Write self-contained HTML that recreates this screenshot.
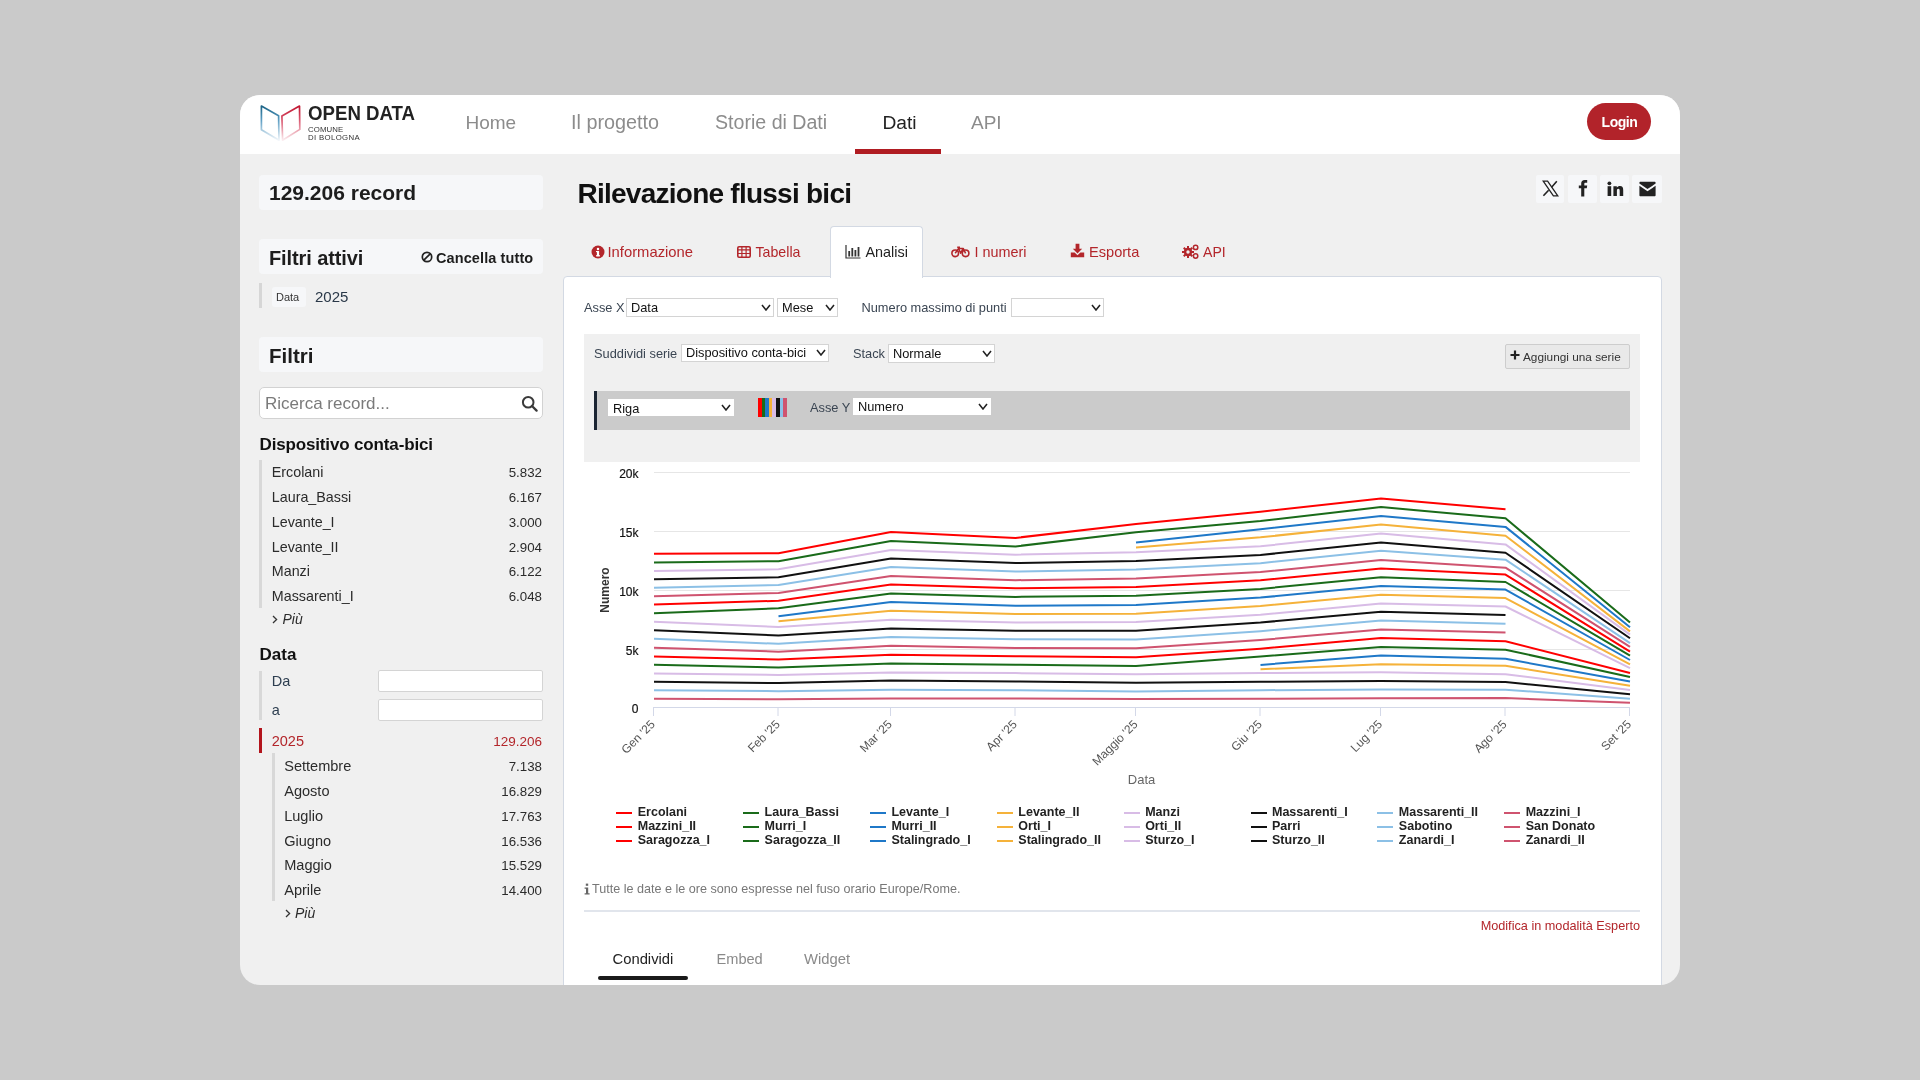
<!DOCTYPE html><html><head><meta charset="utf-8"><style>
html,body{margin:0;padding:0;}
body{width:1920px;height:1080px;overflow:hidden;background:#cacaca;font-family:"Liberation Sans",sans-serif;position:relative;}
.win{position:absolute;left:240px;top:95px;width:1440px;height:890px;border-radius:20px;overflow:hidden;background:#f0f0f0;}
.inner{position:absolute;left:-240px;top:-95px;width:1920px;height:1080px;}
.t{position:absolute;line-height:1;white-space:nowrap;}
.inner{will-change:transform;}
.r{position:absolute;}
</style></head><body><div class="win"><div class="inner">
<div class="r" style="left:240px;top:95px;width:1440px;height:59px;background:#fff;"></div>
<svg class="r" style="left:256.8px;top:102px;" width="48" height="42" viewBox="0 0 48 42">
<defs>
<linearGradient id="gb" x1="0" y1="0" x2="0" y2="1"><stop offset="0" stop-color="#1c6486"/><stop offset="0.4" stop-color="#5a9cc2"/><stop offset="1" stop-color="#f2f6fa"/></linearGradient>
<linearGradient id="gr" x1="0" y1="0" x2="0" y2="1"><stop offset="0" stop-color="#c0142f"/><stop offset="0.4" stop-color="#d9566e"/><stop offset="1" stop-color="#fbedf0"/></linearGradient>
</defs>
<path d="M4.4 4.1 L21.6 13.7 L22.0 38.2 L4.4 27.8 Z" fill="none" stroke="url(#gb)" stroke-width="1.7" stroke-linejoin="round"/>
<path d="M24.9 14.1 L42.5 4.1 L42.8 27.4 L25.6 38.2 Z" fill="none" stroke="url(#gr)" stroke-width="1.7" stroke-linejoin="round"/>
</svg>
<div class="t" style="top:103.00px;font-size:20.5px;color:#222;font-weight:bold;left:307.50px;transform:scaleX(0.91);transform-origin:0 0;letter-spacing:0px;">OPEN DATA</div>
<div class="t" style="top:126.00px;font-size:7.8px;color:#333;font-weight:normal;letter-spacing:0.1px;left:308.00px;">COMUNE</div>
<div class="t" style="top:134.00px;font-size:7.8px;color:#333;font-weight:normal;letter-spacing:0.35px;left:308.00px;">DI BOLOGNA</div>
<div class="t" style="top:113.00px;font-size:19px;color:#8c8c8c;font-weight:normal;left:465.50px;">Home</div>
<div class="t" style="top:113.00px;font-size:19.8px;color:#8c8c8c;font-weight:normal;left:571.00px;">Il progetto</div>
<div class="t" style="top:113.00px;font-size:19.6px;color:#8c8c8c;font-weight:normal;left:715.00px;">Storie di Dati</div>
<div class="t" style="top:113.00px;font-size:19.2px;color:#222;font-weight:normal;left:882.50px;">Dati</div>
<div class="t" style="top:113.00px;font-size:19px;color:#8c8c8c;font-weight:normal;left:971.00px;">API</div>
<div class="r" style="left:855px;top:149px;width:86px;height:5px;background:#b01c22;"></div>
<div class="r" style="left:1587px;top:103px;width:64px;height:37px;background:#b2232a;border-radius:19px;"></div>
<div class="t" style="top:115.00px;font-size:14px;color:#fff;font-weight:bold;letter-spacing:-0.45px;left:1319.50px;width:600px;text-align:center;">Login</div>
<div class="r" style="left:259px;top:175px;width:284px;height:35px;background:#f6f7f9;border-radius:4px;"></div>
<div class="t" style="top:182.00px;font-size:21px;color:#1d1d1d;font-weight:bold;left:269.00px;">129.206 record</div>
<div class="r" style="left:259px;top:239px;width:284px;height:35px;background:#f6f7f9;border-radius:4px;"></div>
<div class="t" style="top:248.00px;font-size:20px;color:#1d1d1d;font-weight:bold;letter-spacing:-0.1px;left:269.00px;">Filtri attivi</div>
<svg class="r" style="left:421px;top:251.2px;" width="12" height="12" viewBox="0 0 12 12"><circle cx="6" cy="6" r="4.7" fill="none" stroke="#222" stroke-width="1.7"/><line x1="2.8" y1="9.2" x2="9.2" y2="2.8" stroke="#222" stroke-width="1.7"/></svg>
<div class="t" style="top:251.00px;font-size:14.5px;color:#1d1d1d;font-weight:bold;letter-spacing:0.1px;left:436.00px;">Cancella tutto</div>
<div class="r" style="left:259px;top:283px;width:3px;height:25px;background:#d6d6d6;"></div>
<div class="r" style="left:272px;top:287px;width:34px;height:20px;background:#f6f7f9;border-radius:3px;"></div>
<div class="t" style="top:292.00px;font-size:11px;color:#333;font-weight:normal;left:276.00px;">Data</div>
<div class="t" style="top:289.00px;font-size:15px;color:#2a3848;font-weight:normal;left:315.00px;">2025</div>
<div class="r" style="left:259px;top:337px;width:284px;height:35px;background:#f6f7f9;border-radius:4px;"></div>
<div class="t" style="top:346.00px;font-size:20.5px;color:#1d1d1d;font-weight:bold;left:269.00px;">Filtri</div>
<div class="r" style="left:259px;top:387px;width:284px;height:32px;background:#fff;border:1px solid #d2d2d2;border-radius:5px;box-sizing:border-box;"></div>
<div class="t" style="top:395.00px;font-size:17px;color:#7a7a7a;font-weight:normal;left:265.00px;">Ricerca record...</div>
<svg class="r" style="left:521px;top:395px;" width="18" height="18" viewBox="0 0 18 18"><circle cx="7.2" cy="7.2" r="5.3" fill="none" stroke="#3a3a3a" stroke-width="2"/><line x1="11" y1="11" x2="15.6" y2="15.6" stroke="#3a3a3a" stroke-width="2.3" stroke-linecap="round"/></svg>
<div class="t" style="top:436.00px;font-size:17px;color:#111;font-weight:bold;letter-spacing:-0.15px;left:259.50px;">Dispositivo conta-bici</div>
<div class="r" style="left:259px;top:460px;width:3px;height:148px;background:#d8d8d8;"></div>
<div class="t" style="top:465.00px;font-size:14.3px;color:#2b2b2b;font-weight:normal;left:271.80px;">Ercolani</div>
<div class="t" style="top:466.00px;font-size:13.3px;color:#2b2b2b;font-weight:normal;right:1378.00px;text-align:right;">5.832</div>
<div class="t" style="top:490.00px;font-size:14.3px;color:#2b2b2b;font-weight:normal;left:271.80px;">Laura_Bassi</div>
<div class="t" style="top:491.00px;font-size:13.3px;color:#2b2b2b;font-weight:normal;right:1378.00px;text-align:right;">6.167</div>
<div class="t" style="top:515.00px;font-size:14.3px;color:#2b2b2b;font-weight:normal;left:271.80px;">Levante_I</div>
<div class="t" style="top:516.00px;font-size:13.3px;color:#2b2b2b;font-weight:normal;right:1378.00px;text-align:right;">3.000</div>
<div class="t" style="top:540.00px;font-size:14.3px;color:#2b2b2b;font-weight:normal;left:271.80px;">Levante_II</div>
<div class="t" style="top:541.00px;font-size:13.3px;color:#2b2b2b;font-weight:normal;right:1378.00px;text-align:right;">2.904</div>
<div class="t" style="top:564.00px;font-size:14.3px;color:#2b2b2b;font-weight:normal;left:271.80px;">Manzi</div>
<div class="t" style="top:565.00px;font-size:13.3px;color:#2b2b2b;font-weight:normal;right:1378.00px;text-align:right;">6.122</div>
<div class="t" style="top:589.00px;font-size:14.3px;color:#2b2b2b;font-weight:normal;left:271.80px;">Massarenti_I</div>
<div class="t" style="top:590.00px;font-size:13.3px;color:#2b2b2b;font-weight:normal;right:1378.00px;text-align:right;">6.048</div>
<svg class="r" style="left:272px;top:615px;" width="6" height="9" viewBox="0 0 6 9"><path d="M1 1 L4.6 4.5 L1 8" fill="none" stroke="#333" stroke-width="1.3"/></svg>
<div class="t" style="top:612.00px;font-size:14px;color:#2b2b2b;font-weight:normal;font-style:italic;left:282.50px;">Più</div>
<div class="t" style="top:646.00px;font-size:17px;color:#111;font-weight:bold;left:259.50px;">Data</div>
<div class="r" style="left:259px;top:671px;width:3px;height:49px;background:#d8d8d8;"></div>
<div class="t" style="top:674.00px;font-size:14.5px;color:#2d3e50;font-weight:normal;left:271.70px;">Da</div>
<div class="r" style="left:378px;top:670px;width:165px;height:22px;background:#fff;border:1px solid #d4d4d4;box-sizing:border-box;border-radius:2px;"></div>
<div class="t" style="top:703.00px;font-size:14.5px;color:#2d3e50;font-weight:normal;left:271.70px;">a</div>
<div class="r" style="left:378px;top:699px;width:165px;height:22px;background:#fff;border:1px solid #d4d4d4;box-sizing:border-box;border-radius:2px;"></div>
<div class="r" style="left:259px;top:728px;width:3px;height:25px;background:#b3141c;"></div>
<div class="t" style="top:734.00px;font-size:14.5px;color:#b3262b;font-weight:normal;left:271.70px;">2025</div>
<div class="t" style="top:735.00px;font-size:13.5px;color:#b3262b;font-weight:normal;right:1378.00px;text-align:right;">129.206</div>
<div class="r" style="left:272px;top:753px;width:3px;height:148px;background:#d8d8d8;"></div>
<div class="t" style="top:759.00px;font-size:14.55px;color:#2b2b2b;font-weight:normal;left:284.20px;">Settembre</div>
<div class="t" style="top:760.00px;font-size:13.3px;color:#2b2b2b;font-weight:normal;right:1378.00px;text-align:right;">7.138</div>
<div class="t" style="top:784.00px;font-size:14.55px;color:#2b2b2b;font-weight:normal;left:284.20px;">Agosto</div>
<div class="t" style="top:785.00px;font-size:13.3px;color:#2b2b2b;font-weight:normal;right:1378.00px;text-align:right;">16.829</div>
<div class="t" style="top:809.00px;font-size:14.55px;color:#2b2b2b;font-weight:normal;left:284.20px;">Luglio</div>
<div class="t" style="top:810.00px;font-size:13.3px;color:#2b2b2b;font-weight:normal;right:1378.00px;text-align:right;">17.763</div>
<div class="t" style="top:834.00px;font-size:14.55px;color:#2b2b2b;font-weight:normal;left:284.20px;">Giugno</div>
<div class="t" style="top:835.00px;font-size:13.3px;color:#2b2b2b;font-weight:normal;right:1378.00px;text-align:right;">16.536</div>
<div class="t" style="top:858.00px;font-size:14.55px;color:#2b2b2b;font-weight:normal;left:284.20px;">Maggio</div>
<div class="t" style="top:859.00px;font-size:13.3px;color:#2b2b2b;font-weight:normal;right:1378.00px;text-align:right;">15.529</div>
<div class="t" style="top:883.00px;font-size:14.55px;color:#2b2b2b;font-weight:normal;left:284.20px;">Aprile</div>
<div class="t" style="top:884.00px;font-size:13.3px;color:#2b2b2b;font-weight:normal;right:1378.00px;text-align:right;">14.400</div>
<svg class="r" style="left:284.5px;top:909.2px;" width="6" height="9" viewBox="0 0 6 9"><path d="M1 1 L4.6 4.5 L1 8" fill="none" stroke="#333" stroke-width="1.3"/></svg>
<div class="t" style="top:906.00px;font-size:14px;color:#2b2b2b;font-weight:normal;font-style:italic;left:295.00px;">Più</div>
<div class="t" style="top:180.00px;font-size:28px;color:#111;font-weight:bold;letter-spacing:-0.75px;left:577.50px;">Rilevazione flussi bici</div>
<div class="r" style="left:1536px;top:175px;width:28px;height:28px;background:#f6f7f9;border-radius:2px;"></div>
<div class="r" style="left:1568px;top:175px;width:29px;height:28px;background:#f6f7f9;border-radius:2px;"></div>
<div class="r" style="left:1600px;top:175px;width:29px;height:28px;background:#f6f7f9;border-radius:2px;"></div>
<div class="r" style="left:1632px;top:175px;width:30px;height:28px;background:#f6f7f9;border-radius:2px;"></div>
<svg class="r" style="left:1542px;top:180px;" width="17" height="17" viewBox="0 0 17 17"><path d="M1.2 1.2 H5.6 L15.8 15.8 H11.4 Z" fill="none" stroke="#222" stroke-width="1.3"/><path d="M14.8 1.2 L9.6 7.2 M6.6 10.2 L1.4 15.8" stroke="#222" stroke-width="1.6"/></svg>
<svg class="r" style="left:1577px;top:179px;" width="12" height="18" viewBox="0 0 12 18"><path d="M4.2 17.5 V9.2 H1.8 V6.4 H4.2 V4.6 C4.2 2.2 5.4 1 7.8 1 H10.2 V3.8 H8.6 C7.6 3.8 7.3 4.2 7.3 5 V6.4 H10.2 L9.8 9.2 H7.3 V17.5 Z" fill="#222"/></svg>
<svg class="r" style="left:1606px;top:180px;" width="18" height="17" viewBox="0 0 18 17"><circle cx="3.4" cy="3.3" r="1.9" fill="#222"/><rect x="1.6" y="6.2" width="3.6" height="9.8" fill="#222"/><path d="M7.4 6.2 H10.8 V7.6 C11.5 6.6 12.6 5.9 14 5.9 C16.4 5.9 17.2 7.4 17.2 10 V16 H13.7 V10.8 C13.7 9.5 13.3 8.8 12.3 8.8 C11.3 8.8 10.9 9.6 10.9 10.8 V16 H7.4 Z" fill="#222"/></svg>
<svg class="r" style="left:1638px;top:181px;" width="19" height="16" viewBox="0 0 19 16"><path d="M1.4 1.8 C1.4 1.2 1.9 0.8 2.5 0.8 H16.5 C17.1 0.8 17.6 1.2 17.6 1.8 V2.6 L9.5 8.1 L1.4 2.6 Z" fill="#222"/><path d="M1.4 4.8 L9.5 10.3 L17.6 4.8 V14.2 C17.6 14.8 17.1 15.2 16.5 15.2 H2.5 C1.9 15.2 1.4 14.8 1.4 14.2 Z" fill="#222"/></svg>
<div class="r" style="left:563px;top:276px;width:1099px;height:824px;background:#fff;border:1px solid #d3d9e3;border-radius:4px;box-sizing:border-box;"></div>
<div class="r" style="left:830px;top:226px;width:93px;height:52px;background:#fff;border:1px solid #d3d9e3;border-bottom:none;border-radius:4px 4px 0 0;box-sizing:border-box;"></div>
<svg class="r" style="left:591px;top:245px;" width="14" height="14" viewBox="0 0 14 14"><circle cx="7" cy="7" r="6.5" fill="#b3262b"/><circle cx="7" cy="3.9" r="1.25" fill="#fff"/><rect x="5.9" y="6" width="2.2" height="5.2" fill="#fff"/><rect x="5" y="10.2" width="4" height="1.2" fill="#fff"/><rect x="5" y="6" width="2.5" height="1.1" fill="#fff"/></svg>
<div class="t" style="top:245.00px;font-size:14.8px;color:#b3262b;font-weight:normal;left:607.50px;">Informazione</div>
<svg class="r" style="left:737px;top:245.5px;" width="14" height="12" viewBox="0 0 14 12"><rect x="0.8" y="0.8" width="12.4" height="10.4" rx="1.2" fill="none" stroke="#b3262b" stroke-width="1.6"/><path d="M0.8 3.9 H13.2 M0.8 7.5 H13.2 M4.9 0.8 V11.2 M9.1 0.8 V11.2" stroke="#b3262b" stroke-width="1.2"/></svg>
<div class="t" style="top:245.00px;font-size:14.2px;color:#b3262b;font-weight:normal;left:755.50px;">Tabella</div>
<svg class="r" style="left:845px;top:244px;" width="16" height="15" viewBox="0 0 16 15"><path d="M1 1 V14 H15.5" fill="none" stroke="#333" stroke-width="1.2"/><rect x="3.3" y="7" width="1.8" height="5.5" fill="#333"/><rect x="6.4" y="4" width="1.8" height="8.5" fill="#333"/><rect x="9.5" y="6" width="1.8" height="6.5" fill="#333"/><rect x="12.6" y="3" width="1.8" height="9.5" fill="#333"/></svg>
<div class="t" style="top:245.00px;font-size:14.4px;color:#222;font-weight:normal;left:865.50px;">Analisi</div>
<svg class="r" style="left:951px;top:246px;" width="19" height="12" viewBox="0 0 19 12"><circle cx="4.2" cy="7.3" r="3.3" fill="none" stroke="#b3262b" stroke-width="1.6"/><circle cx="14.6" cy="7.3" r="3.3" fill="none" stroke="#b3262b" stroke-width="1.6"/><path d="M4.2 7.3 L7.6 2.4 H12.2 L14.6 7.3 M7.6 2.4 L9.6 7.3 L12.2 2.4 M6.2 1.2 H9" fill="none" stroke="#b3262b" stroke-width="1.5" stroke-linejoin="round"/></svg>
<div class="t" style="top:245.00px;font-size:14.4px;color:#b3262b;font-weight:normal;left:974.50px;">I numeri</div>
<svg class="r" style="left:1070px;top:243px;" width="15" height="15" viewBox="0 0 15 15"><path d="M5.6 0.8 H9.4 V5.8 H12.2 L7.5 10.4 L2.8 5.8 H5.6 Z" fill="#b3262b"/><path d="M0.8 9.6 H4.6 L7.5 12.2 L10.4 9.6 H14.2 V14.2 H0.8 Z" fill="#b3262b"/></svg>
<div class="t" style="top:245.00px;font-size:14.6px;color:#b3262b;font-weight:normal;left:1089.00px;">Esporta</div>
<svg class="r" style="left:1182px;top:244px;" width="17" height="15" viewBox="0 0 17 15"><g fill="#b3262b"><circle cx="6" cy="8" r="4.2"/><rect x="5" y="2" width="2" height="12"/><rect x="0" y="7" width="12" height="2"/><rect x="5" y="2" width="2" height="12" transform="rotate(45 6 8)"/><rect x="5" y="2" width="2" height="12" transform="rotate(-45 6 8)"/></g><circle cx="6" cy="8" r="1.7" fill="#f0f0f0"/><circle cx="13.6" cy="3.4" r="2.2" fill="none" stroke="#b3262b" stroke-width="1.5"/><circle cx="13.6" cy="12" r="2.2" fill="none" stroke="#b3262b" stroke-width="1.5"/></svg>
<div class="t" style="top:245.00px;font-size:14.1px;color:#b3262b;font-weight:normal;left:1203.00px;">API</div>
<div class="t" style="top:302.00px;font-size:12.8px;color:#3a4552;font-weight:normal;left:584.00px;">Asse X</div>
<div class="r" style="left:626px;top:298px;width:148px;height:19px;background:#fff;border:1px solid #d4d4d4;box-sizing:border-box;"></div>
<div class="t" style="top:302.00px;font-size:12.8px;color:#111;font-weight:normal;left:631.00px;">Data</div>
<svg class="r" style="left:760.5px;top:303.9px;" width="10" height="7" viewBox="0 0 10 7"><path d="M1 1 L5.0 6 L9 1" fill="none" stroke="#222" stroke-width="1.55"/></svg>
<div class="r" style="left:777px;top:298px;width:61px;height:19px;background:#fff;border:1px solid #d4d4d4;box-sizing:border-box;"></div>
<div class="t" style="top:302.00px;font-size:12.8px;color:#111;font-weight:normal;left:782.00px;">Mese</div>
<svg class="r" style="left:824.5px;top:303.9px;" width="10" height="7" viewBox="0 0 10 7"><path d="M1 1 L5.0 6 L9 1" fill="none" stroke="#222" stroke-width="1.55"/></svg>
<div class="t" style="top:302.00px;font-size:12.8px;color:#3a4552;font-weight:normal;left:861.50px;">Numero massimo di punti</div>
<div class="r" style="left:1011px;top:298px;width:93px;height:19px;background:#fff;border:1px solid #d4d4d4;box-sizing:border-box;"></div>
<div class="t" style="top:302.00px;font-size:12.8px;color:#111;font-weight:normal;left:1016.00px;"></div>
<svg class="r" style="left:1090.5px;top:303.9px;" width="10" height="7" viewBox="0 0 10 7"><path d="M1 1 L5.0 6 L9 1" fill="none" stroke="#222" stroke-width="1.55"/></svg>
<div class="r" style="left:584px;top:334px;width:1056px;height:128px;background:#f0f0f0;"></div>
<div class="t" style="top:348.00px;font-size:12.8px;color:#3a4552;font-weight:normal;left:594.00px;">Suddividi serie</div>
<div class="r" style="left:681px;top:344px;width:148px;height:18px;background:#fff;border:1px solid #d4d4d4;box-sizing:border-box;"></div>
<div class="t" style="top:347.00px;font-size:12.8px;color:#111;font-weight:normal;left:686.00px;">Dispositivo conta-bici</div>
<svg class="r" style="left:815.5px;top:349.4px;" width="10" height="7" viewBox="0 0 10 7"><path d="M1 1 L5.0 6 L9 1" fill="none" stroke="#222" stroke-width="1.55"/></svg>
<div class="t" style="top:348.00px;font-size:12.8px;color:#3a4552;font-weight:normal;left:853.00px;">Stack</div>
<div class="r" style="left:888px;top:344px;width:107px;height:19px;background:#fff;border:1px solid #d4d4d4;box-sizing:border-box;"></div>
<div class="t" style="top:348.00px;font-size:12.8px;color:#111;font-weight:normal;left:893.00px;">Normale</div>
<svg class="r" style="left:981.5px;top:349.9px;" width="10" height="7" viewBox="0 0 10 7"><path d="M1 1 L5.0 6 L9 1" fill="none" stroke="#222" stroke-width="1.55"/></svg>
<div class="r" style="left:1505px;top:344px;width:125px;height:25px;background:#e9e9e9;border:1px solid #cdcdcd;box-sizing:border-box;border-radius:2px;"></div>
<svg class="r" style="left:1510px;top:350px;" width="10" height="10" viewBox="0 0 10 10"><path d="M5 0.5 V9.5 M0.5 5 H9.5" stroke="#222" stroke-width="2.2"/></svg>
<div class="t" style="top:352.00px;font-size:11.8px;color:#333;font-weight:normal;left:1523.00px;">Aggiungi una serie</div>
<div class="r" style="left:594px;top:391px;width:1036px;height:39px;background:#cbcbcb;border-left:3px solid #1b2533;box-sizing:border-box;"></div>
<div class="r" style="left:608px;top:399px;width:126px;height:17px;background:#fff;box-sizing:border-box;"></div>
<div class="t" style="top:403.00px;font-size:12.8px;color:#111;font-weight:normal;left:613.00px;">Riga</div>
<svg class="r" style="left:720.5px;top:403.9px;" width="10" height="7" viewBox="0 0 10 7"><path d="M1 1 L5.0 6 L9 1" fill="none" stroke="#222" stroke-width="1.55"/></svg>
<div class="r" style="left:758.0px;top:398px;width:3.919999999999959px;height:19px;background:#ff0000;"></div>
<div class="r" style="left:761.62px;top:398px;width:3.919999999999959px;height:19px;background:#1a6b1a;"></div>
<div class="r" style="left:765.24px;top:398px;width:3.919999999999959px;height:19px;background:#1f78c8;"></div>
<div class="r" style="left:768.86px;top:398px;width:3.919999999999959px;height:19px;background:#f5b23a;"></div>
<div class="r" style="left:772.48px;top:398px;width:3.919999999999959px;height:19px;background:#d8bce6;"></div>
<div class="r" style="left:776.1px;top:398px;width:3.919999999999959px;height:19px;background:#111111;"></div>
<div class="r" style="left:779.72px;top:398px;width:3.919999999999959px;height:19px;background:#8cc0e6;"></div>
<div class="r" style="left:783.34px;top:398px;width:3.919999999999959px;height:19px;background:#cf536f;"></div>
<div class="t" style="top:402.00px;font-size:12.8px;color:#3a4552;font-weight:normal;left:810.00px;">Asse Y</div>
<div class="r" style="left:853px;top:398px;width:138px;height:17px;background:#fff;box-sizing:border-box;"></div>
<div class="t" style="top:401.00px;font-size:12.8px;color:#111;font-weight:normal;left:858.00px;">Numero</div>
<svg class="r" style="left:977.5px;top:402.9px;" width="10" height="7" viewBox="0 0 10 7"><path d="M1 1 L5.0 6 L9 1" fill="none" stroke="#222" stroke-width="1.55"/></svg>
<svg class="r" style="left:0;top:0" width="1920" height="1080"><line x1="654" y1="472.5" x2="1630" y2="472.5" stroke="#e6e6e6" stroke-width="1"/><line x1="654" y1="531.5" x2="1630" y2="531.5" stroke="#e6e6e6" stroke-width="1"/><line x1="654" y1="590.5" x2="1630" y2="590.5" stroke="#e6e6e6" stroke-width="1"/><line x1="654" y1="649.5" x2="1630" y2="649.5" stroke="#e6e6e6" stroke-width="1"/><line x1="654" y1="707.5" x2="1630" y2="707.5" stroke="#d3d8e8" stroke-width="1"/><line x1="653.5" y1="707" x2="653.5" y2="716" stroke="#d3d8e8" stroke-width="1"/><line x1="778.0" y1="707" x2="778.0" y2="716" stroke="#d3d8e8" stroke-width="1"/><line x1="890.5" y1="707" x2="890.5" y2="716" stroke="#d3d8e8" stroke-width="1"/><line x1="1015.0" y1="707" x2="1015.0" y2="716" stroke="#d3d8e8" stroke-width="1"/><line x1="1135.5" y1="707" x2="1135.5" y2="716" stroke="#d3d8e8" stroke-width="1"/><line x1="1260.0" y1="707" x2="1260.0" y2="716" stroke="#d3d8e8" stroke-width="1"/><line x1="1380.5" y1="707" x2="1380.5" y2="716" stroke="#d3d8e8" stroke-width="1"/><line x1="1505.0" y1="707" x2="1505.0" y2="716" stroke="#d3d8e8" stroke-width="1"/><line x1="1629.5" y1="707" x2="1629.5" y2="716" stroke="#d3d8e8" stroke-width="1"/><polyline points="654,698.7 778.5,699.2 891,698.6 1015.5,698.6 1136,698.9 1260.5,698.7 1381,698.2 1505.5,698.1 1630,702.8" fill="none" stroke="#cf536f" stroke-width="2" stroke-linejoin="round" stroke-linecap="butt"/><polyline points="654,690.3 778.5,691.2 891,689.8 1015.5,690.3 1136,691.5 1260.5,690.2 1381,689.6 1505.5,689.7 1630,698.8" fill="none" stroke="#8cc0e6" stroke-width="2" stroke-linejoin="round" stroke-linecap="butt"/><polyline points="654,681.8 778.5,683 891,680.6 1015.5,681.5 1136,682.8 1260.5,681.8 1381,680.9 1505.5,682.1 1630,694.2" fill="none" stroke="#111111" stroke-width="2" stroke-linejoin="round" stroke-linecap="butt"/><polyline points="654,673.5 778.5,675 891,672.4 1015.5,673.1 1136,674.3 1260.5,673 1381,672.3 1505.5,674.2 1630,690" fill="none" stroke="#d8bce6" stroke-width="2" stroke-linejoin="round" stroke-linecap="butt"/><polyline points="1260.5,669.2 1381,664.2 1505.5,665.8 1630,685.7" fill="none" stroke="#f5b23a" stroke-width="2" stroke-linejoin="round" stroke-linecap="butt"/><polyline points="1260.5,664.9 1381,655.6 1505.5,658.8 1630,681.5" fill="none" stroke="#1f78c8" stroke-width="2" stroke-linejoin="round" stroke-linecap="butt"/><polyline points="654,664.8 778.5,667.5 891,663.6 1015.5,664.8 1136,665.9 1260.5,656.5 1381,646.9 1505.5,649.7 1630,676.9" fill="none" stroke="#1a6b1a" stroke-width="2" stroke-linejoin="round" stroke-linecap="butt"/><polyline points="654,656.5 778.5,659.5 891,654.8 1015.5,656.3 1136,657.2 1260.5,648.7 1381,638.1 1505.5,641.3 1630,673" fill="none" stroke="#ff0000" stroke-width="2" stroke-linejoin="round" stroke-linecap="butt"/><polyline points="654,647.8 778.5,651.7 891,645.8 1015.5,647.9 1136,648.3 1260.5,640 1381,629.5 1505.5,632.4" fill="none" stroke="#cf536f" stroke-width="2" stroke-linejoin="round" stroke-linecap="butt"/><polyline points="654,638.85 778.5,643.8 891,637 1015.5,639.3 1136,639.6 1260.5,631.2 1381,620.6 1505.5,623.8" fill="none" stroke="#8cc0e6" stroke-width="2" stroke-linejoin="round" stroke-linecap="butt"/><polyline points="654,630.2 778.5,635.5 891,628.4 1015.5,630.8 1136,630.7 1260.5,622.5 1381,611.8 1505.5,615" fill="none" stroke="#111111" stroke-width="2" stroke-linejoin="round" stroke-linecap="butt"/><polyline points="654,621.7 778.5,627 891,619.8 1015.5,622.4 1136,622 1260.5,614.7 1381,603.5 1505.5,606.5 1630,668.2" fill="none" stroke="#d8bce6" stroke-width="2" stroke-linejoin="round" stroke-linecap="butt"/><polyline points="778.5,621.2 891,610.8 1015.5,614.1 1136,613.7 1260.5,606 1381,594.7 1505.5,598.1 1630,664.4" fill="none" stroke="#f5b23a" stroke-width="2" stroke-linejoin="round" stroke-linecap="butt"/><polyline points="778.5,616.2 891,602 1015.5,605.7 1136,605 1260.5,597.6 1381,586.1 1505.5,589.6 1630,660" fill="none" stroke="#1f78c8" stroke-width="2" stroke-linejoin="round" stroke-linecap="butt"/><polyline points="654,613.2 778.5,608.3 891,593.4 1015.5,596.9 1136,595.7 1260.5,588.9 1381,577.2 1505.5,582 1630,655.6" fill="none" stroke="#1a6b1a" stroke-width="2" stroke-linejoin="round" stroke-linecap="butt"/><polyline points="654,604.5 778.5,600.8 891,584.6 1015.5,588.3 1136,586.9 1260.5,580.3 1381,568.4 1505.5,574.6 1630,651.7" fill="none" stroke="#ff0000" stroke-width="2" stroke-linejoin="round" stroke-linecap="butt"/><polyline points="654,596.2 778.5,593 891,575.9 1015.5,580.2 1136,578.5 1260.5,572 1381,559.9 1505.5,567.7 1630,646.9" fill="none" stroke="#cf536f" stroke-width="2" stroke-linejoin="round" stroke-linecap="butt"/><polyline points="654,587.7 778.5,585 891,567.1 1015.5,571.5 1136,569.6 1260.5,563.2 1381,550.7 1505.5,559.7 1630,643.1" fill="none" stroke="#8cc0e6" stroke-width="2" stroke-linejoin="round" stroke-linecap="butt"/><polyline points="654,579.35 778.5,577.2 891,558.4 1015.5,563.1 1136,560.9 1260.5,555 1381,542.4 1505.5,552.7 1630,638.3" fill="none" stroke="#111111" stroke-width="2" stroke-linejoin="round" stroke-linecap="butt"/><polyline points="654,571.0 778.5,569.3 891,549.9 1015.5,554.7 1136,552.2 1260.5,546.3 1381,533.4 1505.5,544.4 1630,634.6" fill="none" stroke="#d8bce6" stroke-width="2" stroke-linejoin="round" stroke-linecap="butt"/><polyline points="1136,547.4 1260.5,537.3 1381,524.6 1505.5,535.8 1630,631.4" fill="none" stroke="#f5b23a" stroke-width="2" stroke-linejoin="round" stroke-linecap="butt"/><polyline points="1136,542.4 1260.5,529.2 1381,515.9 1505.5,526.9 1630,627.2" fill="none" stroke="#1f78c8" stroke-width="2" stroke-linejoin="round" stroke-linecap="butt"/><polyline points="654,562.5 778.5,561.2 891,541.1 1015.5,546.4 1136,532.2 1260.5,521 1381,507.1 1505.5,518.3 1630,622.6" fill="none" stroke="#1a6b1a" stroke-width="2" stroke-linejoin="round" stroke-linecap="butt"/><polyline points="654,553.85 778.5,553.3 891,532 1015.5,537.9 1136,523.9 1260.5,511.7 1381,498.6 1505.5,509.3" fill="none" stroke="#ff0000" stroke-width="2" stroke-linejoin="round" stroke-linecap="butt"/></svg>
<div class="t" style="top:468.00px;font-size:12px;color:#111;font-weight:normal;right:1281.50px;text-align:right;-webkit-text-stroke:0.2px #111;">20k</div>
<div class="t" style="top:527.00px;font-size:12px;color:#111;font-weight:normal;right:1281.50px;text-align:right;-webkit-text-stroke:0.2px #111;">15k</div>
<div class="t" style="top:586.00px;font-size:12px;color:#111;font-weight:normal;right:1281.50px;text-align:right;-webkit-text-stroke:0.2px #111;">10k</div>
<div class="t" style="top:645.00px;font-size:12px;color:#111;font-weight:normal;right:1281.50px;text-align:right;-webkit-text-stroke:0.2px #111;">5k</div>
<div class="t" style="top:703.00px;font-size:12px;color:#111;font-weight:normal;right:1281.50px;text-align:right;-webkit-text-stroke:0.2px #111;">0</div>
<div class="t" style="left:574.5px;top:583.5px;width:60px;text-align:center;font-size:12px;font-weight:bold;color:#333;transform:rotate(-90deg);">Numero</div>
<div class="t" style="right:1271px;top:717.8px;font-size:12px;color:#555;transform:rotate(-45deg);transform-origin:100% 0;">Gen '25</div>
<div class="t" style="right:1146.5px;top:717.8px;font-size:12px;color:#555;transform:rotate(-45deg);transform-origin:100% 0;">Feb '25</div>
<div class="t" style="right:1034px;top:717.8px;font-size:12px;color:#555;transform:rotate(-45deg);transform-origin:100% 0;">Mar '25</div>
<div class="t" style="right:909.5px;top:717.8px;font-size:12px;color:#555;transform:rotate(-45deg);transform-origin:100% 0;">Apr '25</div>
<div class="t" style="right:789px;top:717.8px;font-size:12px;color:#555;transform:rotate(-45deg);transform-origin:100% 0;">Maggio '25</div>
<div class="t" style="right:664.5px;top:717.8px;font-size:12px;color:#555;transform:rotate(-45deg);transform-origin:100% 0;">Giu '25</div>
<div class="t" style="right:544px;top:717.8px;font-size:12px;color:#555;transform:rotate(-45deg);transform-origin:100% 0;">Lug '25</div>
<div class="t" style="right:419.5px;top:717.8px;font-size:12px;color:#555;transform:rotate(-45deg);transform-origin:100% 0;">Ago '25</div>
<div class="t" style="right:295px;top:717.8px;font-size:12px;color:#555;transform:rotate(-45deg);transform-origin:100% 0;">Set '25</div>
<div class="t" style="top:773.00px;font-size:13px;color:#666;font-weight:normal;left:841.50px;width:600px;text-align:center;">Data</div>
<div class="r" style="left:616.25px;top:811.5px;width:16.0px;height:2.0px;background:#ff0000;"></div>
<div class="t" style="top:806.00px;font-size:12.5px;color:#222;font-weight:bold;left:637.75px;">Ercolani</div>
<div class="r" style="left:616.25px;top:825.65px;width:16.0px;height:2.0px;background:#ff0000;"></div>
<div class="t" style="top:820.00px;font-size:12.5px;color:#222;font-weight:bold;left:637.75px;">Mazzini_II</div>
<div class="r" style="left:616.25px;top:839.8px;width:16.0px;height:2.0px;background:#ff0000;"></div>
<div class="t" style="top:834.00px;font-size:12.5px;color:#222;font-weight:bold;left:637.75px;">Saragozza_I</div>
<div class="r" style="left:743.1px;top:811.5px;width:16.0px;height:2.0px;background:#1a6b1a;"></div>
<div class="t" style="top:806.00px;font-size:12.5px;color:#222;font-weight:bold;left:764.60px;">Laura_Bassi</div>
<div class="r" style="left:743.1px;top:825.65px;width:16.0px;height:2.0px;background:#1a6b1a;"></div>
<div class="t" style="top:820.00px;font-size:12.5px;color:#222;font-weight:bold;left:764.60px;">Murri_I</div>
<div class="r" style="left:743.1px;top:839.8px;width:16.0px;height:2.0px;background:#1a6b1a;"></div>
<div class="t" style="top:834.00px;font-size:12.5px;color:#222;font-weight:bold;left:764.60px;">Saragozza_II</div>
<div class="r" style="left:869.95px;top:811.5px;width:16.0px;height:2.0px;background:#1f78c8;"></div>
<div class="t" style="top:806.00px;font-size:12.5px;color:#222;font-weight:bold;left:891.45px;">Levante_I</div>
<div class="r" style="left:869.95px;top:825.65px;width:16.0px;height:2.0px;background:#1f78c8;"></div>
<div class="t" style="top:820.00px;font-size:12.5px;color:#222;font-weight:bold;left:891.45px;">Murri_II</div>
<div class="r" style="left:869.95px;top:839.8px;width:16.0px;height:2.0px;background:#1f78c8;"></div>
<div class="t" style="top:834.00px;font-size:12.5px;color:#222;font-weight:bold;left:891.45px;">Stalingrado_I</div>
<div class="r" style="left:996.8px;top:811.5px;width:16.0px;height:2.0px;background:#f5b23a;"></div>
<div class="t" style="top:806.00px;font-size:12.5px;color:#222;font-weight:bold;left:1018.30px;">Levante_II</div>
<div class="r" style="left:996.8px;top:825.65px;width:16.0px;height:2.0px;background:#f5b23a;"></div>
<div class="t" style="top:820.00px;font-size:12.5px;color:#222;font-weight:bold;left:1018.30px;">Orti_I</div>
<div class="r" style="left:996.8px;top:839.8px;width:16.0px;height:2.0px;background:#f5b23a;"></div>
<div class="t" style="top:834.00px;font-size:12.5px;color:#222;font-weight:bold;left:1018.30px;">Stalingrado_II</div>
<div class="r" style="left:1123.65px;top:811.5px;width:16.0px;height:2.0px;background:#d8bce6;"></div>
<div class="t" style="top:806.00px;font-size:12.5px;color:#222;font-weight:bold;left:1145.15px;">Manzi</div>
<div class="r" style="left:1123.65px;top:825.65px;width:16.0px;height:2.0px;background:#d8bce6;"></div>
<div class="t" style="top:820.00px;font-size:12.5px;color:#222;font-weight:bold;left:1145.15px;">Orti_II</div>
<div class="r" style="left:1123.65px;top:839.8px;width:16.0px;height:2.0px;background:#d8bce6;"></div>
<div class="t" style="top:834.00px;font-size:12.5px;color:#222;font-weight:bold;left:1145.15px;">Sturzo_I</div>
<div class="r" style="left:1250.5px;top:811.5px;width:16.0px;height:2.0px;background:#111111;"></div>
<div class="t" style="top:806.00px;font-size:12.5px;color:#222;font-weight:bold;left:1272.00px;">Massarenti_I</div>
<div class="r" style="left:1250.5px;top:825.65px;width:16.0px;height:2.0px;background:#111111;"></div>
<div class="t" style="top:820.00px;font-size:12.5px;color:#222;font-weight:bold;left:1272.00px;">Parri</div>
<div class="r" style="left:1250.5px;top:839.8px;width:16.0px;height:2.0px;background:#111111;"></div>
<div class="t" style="top:834.00px;font-size:12.5px;color:#222;font-weight:bold;left:1272.00px;">Sturzo_II</div>
<div class="r" style="left:1377.35px;top:811.5px;width:16.0px;height:2.0px;background:#8cc0e6;"></div>
<div class="t" style="top:806.00px;font-size:12.5px;color:#222;font-weight:bold;left:1398.85px;">Massarenti_II</div>
<div class="r" style="left:1377.35px;top:825.65px;width:16.0px;height:2.0px;background:#8cc0e6;"></div>
<div class="t" style="top:820.00px;font-size:12.5px;color:#222;font-weight:bold;left:1398.85px;">Sabotino</div>
<div class="r" style="left:1377.35px;top:839.8px;width:16.0px;height:2.0px;background:#8cc0e6;"></div>
<div class="t" style="top:834.00px;font-size:12.5px;color:#222;font-weight:bold;left:1398.85px;">Zanardi_I</div>
<div class="r" style="left:1504.1999999999998px;top:811.5px;width:16.0px;height:2.0px;background:#cf536f;"></div>
<div class="t" style="top:806.00px;font-size:12.5px;color:#222;font-weight:bold;left:1525.70px;">Mazzini_I</div>
<div class="r" style="left:1504.1999999999998px;top:825.65px;width:16.0px;height:2.0px;background:#cf536f;"></div>
<div class="t" style="top:820.00px;font-size:12.5px;color:#222;font-weight:bold;left:1525.70px;">San Donato</div>
<div class="r" style="left:1504.1999999999998px;top:839.8px;width:16.0px;height:2.0px;background:#cf536f;"></div>
<div class="t" style="top:834.00px;font-size:12.5px;color:#222;font-weight:bold;left:1525.70px;">Zanardi_II</div>
<svg class="r" style="left:583.5px;top:882.5px;" width="6" height="12" viewBox="0 0 6 12"><rect x="1.8" y="0.6" width="2.4" height="2.2" fill="#666"/><path d="M0.6 4.4 H4.2 V10.3 H5.6 V11.6 H0.6 V10.3 H2 V5.7 H0.6 Z" fill="#666"/></svg>
<div class="t" style="top:883.00px;font-size:12.6px;color:#777;font-weight:normal;left:592.00px;">Tutte le date e le ore sono espresse nel fuso orario Europe/Rome.</div>
<div class="r" style="left:584px;top:910px;width:1056px;height:2px;background:#e1e5ec;"></div>
<div class="t" style="top:920.00px;font-size:12.7px;color:#b3262b;font-weight:normal;right:280.00px;text-align:right;">Modifica in modalità Esperto</div>
<div class="t" style="top:952.00px;font-size:14.8px;color:#222;font-weight:normal;left:612.50px;">Condividi</div>
<div class="t" style="top:952.00px;font-size:14.6px;color:#8a8a8a;font-weight:normal;left:716.50px;">Embed</div>
<div class="t" style="top:952.00px;font-size:14.8px;color:#8a8a8a;font-weight:normal;left:804.00px;">Widget</div>
<div class="r" style="left:598px;top:976px;width:90px;height:3.5px;background:#1a1a1a;border-radius:2px;"></div>
</div></div></body></html>
